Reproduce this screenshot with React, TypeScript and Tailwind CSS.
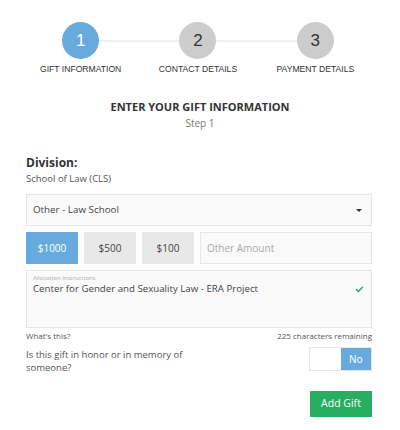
import { Check } from "lucide-react";

const steps = [
  { n: "1", label: "GIFT INFORMATION", active: true },
  { n: "2", label: "CONTACT DETAILS", active: false },
  { n: "3", label: "PAYMENT DETAILS", active: false },
];

const amounts = ["$1000", "$500", "$100"];

export default function App() {
  return (
    <main className="h-[430px] w-[400px] bg-white text-[#444]" style={{ fontFamily: '"Open Sans", sans-serif' }}>
      {/* stepper */}
      <div className="relative mx-[22px] grid w-[352px] grid-cols-3 pt-[22px]">
        <div className="absolute left-[16.6%] right-[16.6%] top-[40px] h-[2px] bg-[#f0f0f0]" />
        {steps.map((s) => (
          <div key={s.n} className="relative flex flex-col items-center">
            <div
              className={`flex h-[37px] w-[37px] items-center justify-center rounded-full text-[17px] ${
                s.active ? "bg-[#67abde] text-white" : "bg-[#cccccc] text-[#333]"
              }`}
              style={{ fontFamily: '"Liberation Sans", Arial, sans-serif' }}
            >
              {s.n}
            </div>
            <p
              className="mt-[4px] text-[8.6px] leading-[12px] text-[#333]"
              style={{ fontFamily: '"Liberation Sans", Arial, sans-serif' }}
            >
              {s.label}
            </p>
          </div>
        ))}
      </div>

      <h1 className="mt-[24px] text-center text-[11px] font-bold leading-[16px] text-[#333]">
        ENTER YOUR GIFT INFORMATION
      </h1>
      <p className="mt-[1px] text-center text-[10px] leading-[14px] text-[#777]">Step 1</p>

      <section className="mx-[26px] mt-[25px] w-[346px]">
        <h2 className="text-[12px] font-bold leading-[16px] text-[#333]">Division:</h2>
        <p className="mt-[1px] text-[9.5px] leading-[14px] text-[#555]">School of Law (CLS)</p>

        <div className="mt-[8px] flex h-[32px] items-center justify-between border border-[#e6e6e6] bg-[#fafafa] pl-[6px] pr-[9px]">
          <span className="text-[9.8px] text-[#444]">Other - Law School</span>
          <span className="h-0 w-0 border-x-[3px] border-t-[3px] border-x-transparent border-t-[#333]" />
        </div>

        <div className="mt-[6px] flex h-[32px] gap-[6px]">
          {amounts.map((a, i) => (
            <button
              key={a}
              className={`w-[52px] text-[10px] ${i === 0 ? "bg-[#67abde] text-white" : "bg-[#e8e8e8] text-[#444]"}`}
            >
              {a}
            </button>
          ))}
          <div className="flex flex-1 items-center border border-[#e6e6e6] bg-[#fafafa] px-[6px] text-[10px] text-[#aaa]">
            Other Amount
          </div>
        </div>

        <div className="relative mt-[6px] h-[58px] border border-[#e6e6e6] bg-[#fafafa] px-[6px] pt-[3px]">
          <p className="text-[6px] leading-[8px] text-[#aaa]">Allocation Instructions</p>
          <p className="text-[9.7px] leading-[13px] text-[#444]">Center for Gender and Sexuality Law - ERA Project</p>
          <Check className="absolute right-[7px] top-[14px] h-[9px] w-[9px] text-[#3aa76d]" strokeWidth={4} />
        </div>

        <div className="mt-[2px] flex justify-between text-[8px] leading-[12px] text-[#555]">
          <span>What's this?</span>
          <span>225 characters remaining</span>
        </div>

        <div className="mt-[5px] flex items-start justify-between">
          <p className="w-[170px] pt-[1px] text-[9.5px] leading-[13px] text-[#555]">
            Is this gift in honor or in memory of someone?
          </p>
          <div className="flex h-[24px] w-[63px] border border-[#e6e6e6]">
            <div className="flex-1 bg-white" />
            <div className="flex flex-1 items-center justify-center bg-[#67abde] text-[10px] text-white">No</div>
          </div>
        </div>

        <div className="mt-[17px] flex justify-end">
          <button className="h-[26px] w-[62px] bg-[#27ae60] text-[10.5px] text-white">Add Gift</button>
        </div>
      </section>
    </main>
  );
}
